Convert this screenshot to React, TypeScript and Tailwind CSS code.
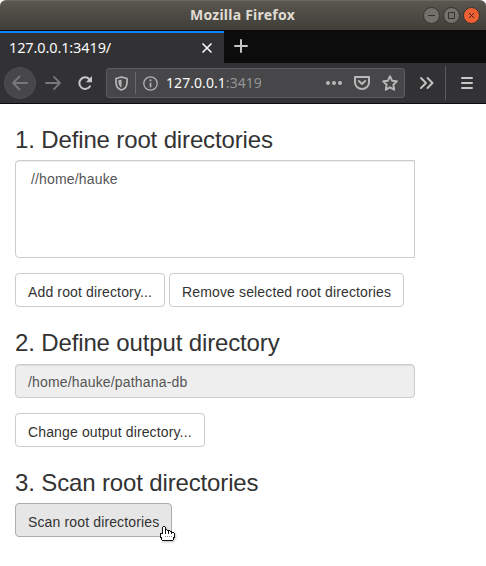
import type { ReactNode } from 'react';

const ui = "font-['Noto_Sans',sans-serif]";

function TitleBar() {
  return (
    <div className="bg-white">
      <header className="grid h-[30px] grid-cols-[1fr_auto_1fr] items-center rounded-t-[6px] border-t border-[#6a685f] bg-linear-to-b from-[#5a574e] to-[#3f3e39] px-1.5">
        <span />
        <h1 className={`${ui} w-[106px] whitespace-nowrap pb-px text-[14px] font-bold leading-[26px] tracking-[0.24px] text-[#dfdbd2]`}>Mozilla Firefox</h1>
        <div className="flex justify-end gap-[3px]">
          <WindowButton color="#73716b" stroke="#33322e"><path d="M5 8.5h7" /></WindowButton>
          <WindowButton color="#73716b" stroke="#33322e"><path d="M5.5 5.5h6v6h-6z" /></WindowButton>
          <WindowButton color="#ec6034" stroke="#4a2113"><path d="m6 6 5 5M11 6l-5 5" /></WindowButton>
        </div>
      </header>
    </div>
  );
}

function WindowButton({ color, stroke, children }: { color: string; stroke: string; children: ReactNode }) {
  return (
    <svg width="17" height="17" viewBox="0 0 17 17" fill="none" stroke={stroke} strokeWidth="1">
      <circle cx="8.5" cy="8.5" r="8" fill={color} stroke="#34332f" />
      {children}
    </svg>
  );
}

function TabStrip() {
  return (
    <div className="flex h-[33px] bg-[#0c0c0d] pt-px">
      <div className="flex w-[224px] items-center border-t-2 border-[#0a84ff] bg-[#323234] pl-[9px] pr-[11px]">
        <span className={`${ui} flex-1 whitespace-nowrap pb-0.5 text-[14.5px] leading-5 tracking-[-0.12px] text-[#f9f9fa]`}>127.0.0.1:3419/</span>
        <svg width="12" height="12" viewBox="0 0 12 12" stroke="#f5f5f5" strokeWidth="1.7" strokeLinecap="round"><path d="m2 2 8 8M10 2l-8 8" /></svg>
      </div>
      <svg className="ml-[9px] mt-[7px]" width="16" height="16" viewBox="0 0 16 16" stroke="#c5c5c6" strokeWidth="2" strokeLinecap="round"><path d="M8 2v12M2 8h12" /></svg>
    </div>
  );
}

function Toolbar() {
  return (
    <div className="flex h-[41px] items-center border-b border-[#0c0c0d] bg-[#323234] pl-1">
      <svg width="32" height="32" viewBox="0 0 32 32" fill="none" stroke="#78787a" strokeWidth="1.8" strokeLinecap="round" strokeLinejoin="round">
        <circle cx="16" cy="16" r="15.5" fill="#474749" stroke="#505052" strokeWidth="1" />
        <path d="M23 16H9m6.5-6.5L9 16l6.5 6.5" />
      </svg>
      <svg className="ml-2" width="18" height="18" viewBox="0 0 18 18" fill="none" stroke="#78787a" strokeWidth="1.8" strokeLinecap="round" strokeLinejoin="round"><path d="M2 9h14M10 2.8 16 9l-6 6.2" /></svg>
      <svg className="ml-[15px]" width="17" height="17" viewBox="0 0 17 17" fill="none" stroke="#c7c7c8" strokeWidth="2" strokeLinecap="round">
        <path d="M13 11.3A5.8 5.8 0 1 1 12.4 4.2" />
        <path d="M15 1v6.300H8.800z" fill="#c7c7c8" stroke="none" />
      </svg>
      <div className="ml-3 flex h-[30px] w-[299px] items-center rounded-[3px] border border-[#5c5c5e] bg-[#474749] pl-2">
        <svg width="13" height="15" viewBox="0 0 13 15" fill="none" stroke="#b8b8b9" strokeWidth="1.7" strokeLinejoin="round">
          <path d="M6.500 1 12 2.500v4C12 10.500 9.500 13 6.500 14 3.500 13 1 10.500 1 6.500v-4z" />
          <path d="M6.500 3.500v8C4.800 10.500 3.500 9 3.500 6.500V4.300z" fill="#b8b8b9" stroke="none" />
        </svg>
        <span className="ml-[7px] h-[22px] w-px bg-[#68686a]" />
        <svg className="ml-[7px]" width="15" height="15" viewBox="0 0 15 15" fill="none" stroke="#b1b1b3" strokeWidth="1.3">
          <circle cx="7.500" cy="7.500" r="6.700" /><path d="M7.500 6.800v4.500" strokeWidth="1.800" /><path d="M7.500 3.400v2" strokeWidth="1.800" />
        </svg>
        <p className={`${ui} ml-2 w-[160px] whitespace-nowrap text-[14px] leading-5 tracking-[0.06px] text-[#f9f9fa]`}>127.0.0.1<span className="text-[#949496]">:3419</span></p>
        <svg width="16" height="6" viewBox="0 0 16 6" fill="#b8b8b9"><circle cx="2" cy="3" r="2" /><circle cx="8" cy="3" r="2" /><circle cx="14" cy="3" r="2" /></svg>
        <svg className="ml-3 shrink-0" width="16" height="14" viewBox="0 0 16 14" fill="none" stroke="#b8b8b9" strokeWidth="2" strokeLinejoin="round" strokeLinecap="round"><path d="M1 1h14v5.500a7 6.500 0 0 1-14 0z" /><path d="m4.800 5 3.200 3 3.200-3" /></svg>
        <svg className="ml-3 shrink-0" width="16" height="16" viewBox="0 0 16 16" fill="none" stroke="#b8b8b9" strokeWidth="1.900" strokeLinejoin="round"><path d="m8 1.200 2.050 4.500 4.750.6-3.450 3.400.9 5L8 12.300l-4.250 2.400.9-5L1.200 6.300l4.750-.6z" /></svg>
      </div>
      <svg className="ml-[14px]" width="16" height="14" viewBox="0 0 16 14" fill="none" stroke="#c4c4c5" strokeWidth="1.900" strokeLinecap="round" strokeLinejoin="round"><path d="m2 2 5 5-5 5M8.500 2l5 5-5 5" /></svg>
      <span className="ml-[10px] h-[34px] w-px bg-[#5b5b5d]" />
      <svg className="ml-[15px]" width="12" height="12" viewBox="0 0 12 12" stroke="#c8c8c9" strokeWidth="2" strokeLinecap="round"><path d="M1 1h10M1 6h10M1 11h10" /></svg>
    </div>
  );
}

function Heading({ children }: { children: ReactNode }) {
  return <h2 className="h-[26px] whitespace-nowrap text-[24px] font-normal leading-[26px] tracking-[-0.14px]">{children}</h2>;
}

function Button({ width, children }: { width: string; children: ReactNode }) {
  return <button className={`${width} h-[34px] whitespace-nowrap rounded border border-[#ccc] bg-white pl-3 pt-1 text-left text-[14px] leading-5 tracking-[0.14px]`}>{children}</button>;
}

/* Hand pointer, one rect per run of pixels in each row */
const hand = [
  '...##...........',
  '..#oo#..........',
  '..#oo#..........',
  '..#oo##.........',
  '..#oo#o###......',
  '..#oo#oo#o##....',
  '..#oo#oo#oo###..',
  '###oo#oo#oo#oo#.',
  '#ooooooooooooo#.',
  '#ooooooooooooo#.',
  '#oooo+o+o+o+oo#.',
  '##ooooooooooo##.',
  '.#ooooooooooo#..',
  '.#ooooooooooo#..',
  '..###########...',
];

function HandCursor() {
  return (
    <svg className="absolute left-[145px] top-[23px] drop-shadow-[1px_1px_1px_rgba(0,0,0,0.25)]" width="16" height="16" viewBox="0 0 16 16" shapeRendering="crispEdges">
      {hand.flatMap((row, y) =>
        [...row].map((cell, x) => cell === '.' ? null : (
          <rect key={`${x}-${y}`} x={x} y={y} width="1" height="1" fill={cell === '#' ? '#111' : cell === '+' ? '#999' : '#fff'} />
        )),
      )}
    </svg>
  );
}

export default function App() {
  return (
    <div className="flex h-[566px] w-[486px] flex-col overflow-hidden bg-white">
      <TitleBar />
      <TabStrip />
      <Toolbar />
      <main className="px-[15px] pt-[23px] font-['Liberation_Sans',Arial,sans-serif] text-[#333]">
        <section>
          <Heading>1. Define root directories</Heading>
          <div className="mt-[7px] h-[98px] w-[400px] rounded-l border border-[#ccc] px-[15px] pt-2 text-[14px] leading-5 tracking-[0.16px] text-[#555] shadow-[inset_0_1px_1px_rgba(0,0,0,0.075)]">//home/hauke</div>
          <div className="mt-[15px] flex gap-1">
            <Button width="w-[150px]">Add root directory...</Button>
            <Button width="w-[235px]">Remove selected root directories</Button>
          </div>
        </section>
        <section className="mt-[23px]">
          <Heading>2. Define output directory</Heading>
          <div className="mt-2 h-[34px] w-[400px] rounded border border-[#ccc] bg-[#eee] px-3 pt-[7px] text-[14px] leading-5 tracking-[0.17px] text-[#555] shadow-[inset_0_1px_1px_rgba(0,0,0,0.075)]">/home/hauke/pathana-db</div>
          <div className="mt-[15px] flex"><Button width="w-[190px]">Change output directory...</Button></div>
        </section>
        <section className="mt-[23px]">
          <Heading>3. Scan root directories</Heading>
          <div className="relative mt-[7px] flex">
            <button className="h-[34px] w-[157px] whitespace-nowrap rounded border border-[#adadad] bg-[#e6e6e6] pl-3 pt-1 text-left text-[14px] leading-5 tracking-[0.14px]">Scan root directories</button>
            <HandCursor />
          </div>
        </section>
      </main>
    </div>
  );
}
